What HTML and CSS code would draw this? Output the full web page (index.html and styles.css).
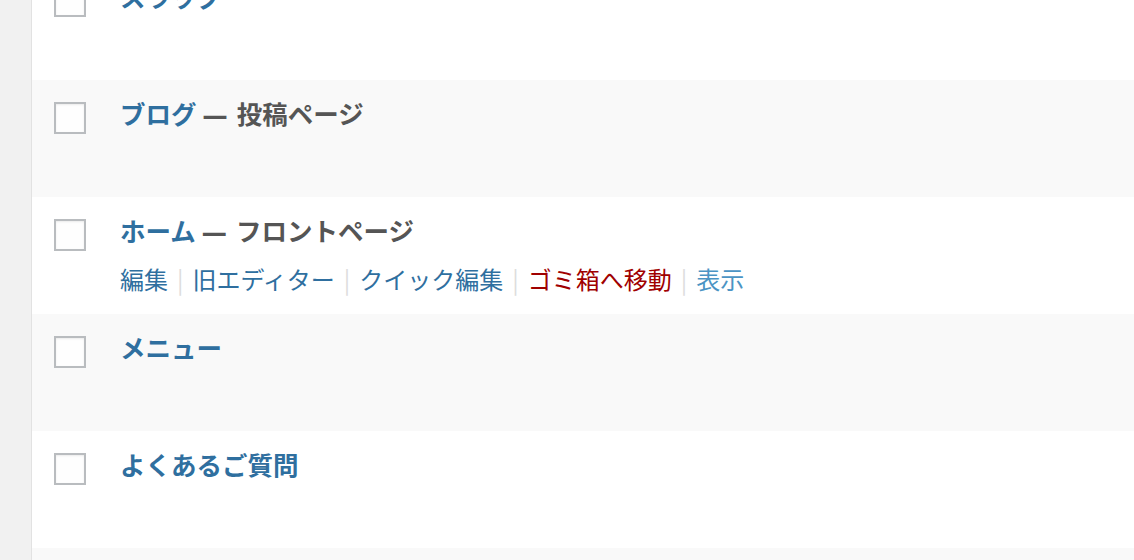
FILE: index.html
```html
<!DOCTYPE html>
<html lang="ja">
<head>
  <meta charset="UTF-8">
  <title>固定ページ</title>
  <link rel="stylesheet" href="styles.css">
</head>
<body>

<div class="layout">
  <div class="sidebar"></div>

  <div class="pages">

    <!-- rows -->
    <div class="row first">
      <div class="check"><span class="box"></span></div>
      <div class="title"><a href="#">スラッグ</a></div>
    </div>

    <div class="row alt">
      <div class="check"><span class="box"></span></div>
      <div class="title"><a href="#">ブログ</a> <span class="state">— 投稿ページ</span></div>
    </div>

    <div class="row">
      <div class="check"><span class="box"></span></div>
      <div class="title">
        <a href="#">ホーム</a> <span class="state">— フロントページ</span>
        <div class="actions">
          <a href="#">編集</a><span class="sep">|</span><a href="#">旧エディター</a><span class="sep">|</span><a href="#">クイック編集</a><span class="sep">|</span><a href="#" class="trash">ゴミ箱へ移動</a><span class="sep">|</span><a href="#" class="view">表示</a>
        </div>
      </div>
    </div>

    <div class="row alt">
      <div class="check"><span class="box"></span></div>
      <div class="title"><a href="#">メニュー</a></div>
    </div>

    <div class="row">
      <div class="check"><span class="box"></span></div>
      <div class="title"><a href="#">よくあるご質問</a></div>
    </div>

    <div class="row alt"></div>

  </div>
</div>

</body>
</html>
```

FILE: styles.css
```css
body {
  margin: 0;
  padding: 0;
  font-family: "Noto Sans CJK JP", "Noto Sans", sans-serif;
  background: #ffffff;
  overflow: hidden;
}
.layout {
  display: flex;
  height: 560px;
  overflow: hidden;
}
.sidebar {
  width: 31px;
  flex-shrink: 0;
  background: #f1f1f1;
  border-right: 1px solid #e2e2e2;
}
.pages {
  flex: 1;
  margin-top: -37px;
}
.row {
  display: flex;
  height: 117px;
  box-sizing: border-box;
  background: #ffffff;
}
.row.alt {
  background: #f9f9f9;
}
.check {
  width: 88px;
  flex-shrink: 0;
  padding: 22px 0 0 22px;
  box-sizing: border-box;
}
.box {
  display: block;
  width: 32px;
  height: 32px;
  box-sizing: border-box;
  border: 2px solid #b9bcbf;
  background: #fefefe;
  box-shadow: inset 0 1px 2px rgba(0, 0, 0, 0.08);
}
.title {
  padding-top: 15px;
  font-size: 25.5px;
  line-height: 36px;
  font-weight: bold;
}
.title a {
  color: #2f6f9f;
  text-decoration: none;
}
.state {
  color: #555555;
  font-family: "DejaVu Sans", "Noto Sans CJK JP", sans-serif;
}
.actions {
  margin-top: 12px;
  font-size: 24px;
  line-height: 33px;
  font-weight: normal;
}
.actions a {
  color: #2f6f9f;
}
.actions .trash {
  color: #a00000;
}
.actions .view {
  color: #4b94c4;
}
.sep {
  color: #dddddd;
  margin: 0 9px;
}
```
